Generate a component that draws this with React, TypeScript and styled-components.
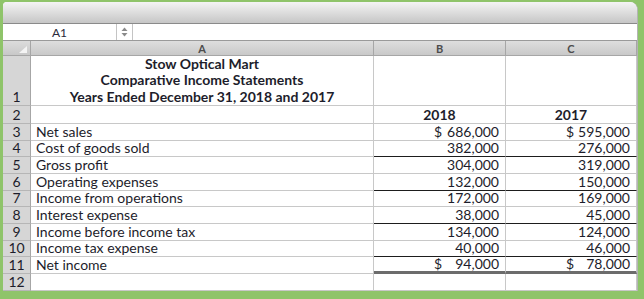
import styled, { createGlobalStyle } from "styled-components";

const Global = createGlobalStyle`
  html, body {
    margin: 0;
    padding: 0;
    background: #8fc46a;
  }
  body {
    font-family: Lato, "Open Sans", sans-serif;
    color: #1d1d2b;
  }
`;

const Window = styled.div`
  margin: 2px 6px 0 3px;
  width: 635px;
  height: 289px;
  background: #fff;
  border-radius: 4px 8px 0 0;
  overflow: hidden;
  display: flex;
  flex-direction: column;
  box-sizing: border-box;
  border-right: 1px solid #b4b4b4;
`;

const TitleBar = styled.div`
  height: 21px;
  flex: none;
  background: linear-gradient(#f4f4f4, #c6c6c6);
  border-bottom: 1px solid #8a8a8a;
`;

const FormulaBar = styled.div`
  height: 16px;
  flex: none;
  display: flex;
  border-bottom: 1px solid #9a9a9a;
`;

const NameBox = styled.div`
  width: 113px;
  display: flex;
  align-items: center;
  justify-content: center;
  font-size: 12px;
  color: #2a2a3a;
  border-right: 1px solid #c4c4c4;
`;

const Spinner = styled.div`
  width: 15px;
  display: flex;
  align-items: center;
  justify-content: center;
  border-right: 1px solid #c4c4c4;
`;

const Sheet = styled.div`
  flex: 1;
  display: grid;
  grid-template-columns: 28px 343px 132px 131px;
  grid-template-rows: 15px 50px 18px repeat(9, 16.667px) 17px;
  font-size: 14px;
`;

const Corner = styled.div`
  position: relative;
  background: linear-gradient(#dcdcdc, #c8c8c8);
  border-right: 1px solid #a6a6a6;
  border-bottom: 1px solid #a6a6a6;
  box-sizing: border-box;
`;

const CornerMark = styled.div`
  position: absolute;
  right: 3px;
  bottom: 2px;
  width: 0;
  height: 0;
  border-left: 8px solid transparent;
  border-bottom: 7px solid #f4f4f4;
`;

const ColHead = styled.div`
  background: linear-gradient(#dedede, #c9c9c9);
  border-right: 1px solid #a6a6a6;
  border-bottom: 1px solid #a6a6a6;
  box-sizing: border-box;
  display: flex;
  align-items: center;
  justify-content: center;
  font-size: 11px;
  font-weight: 700;
  color: #4c4c4c;
`;

const RowHead = styled.div`
  background: #d6d6d6;
  border-right: 1px solid #a6a6a6;
  border-bottom: 1px solid #b6b6b6;
  box-sizing: border-box;
  display: flex;
  align-items: flex-end;
  justify-content: center;
  line-height: 16px;
  font-size: 14px;
  color: #1d1d2b;
`;

type Rule = "single" | "double";
type CellProps = { $rule?: Rule };

const Cell = styled.div<CellProps>`
  box-sizing: border-box;
  border-right: 1px solid #c8c8c8;
  border-bottom: ${(p) =>
    p.$rule === "single"
      ? "1px solid #1d1d1d"
      : p.$rule === "double"
      ? "3px solid #6c6c6c"
      : "1px solid #c8c8c8"};
  display: flex;
  align-items: flex-end;
  line-height: ${(p) => (p.$rule === "double" ? "14px" : "16px")};
  white-space: nowrap;
`;

const LabelCell = styled(Cell)`
  padding-left: 5px;
`;

const TitleCell = styled(Cell)`
  flex-direction: column;
  justify-content: flex-end;
  align-items: center;
  font-weight: 700;
  line-height: 16.3px;
`;

const YearCell = styled(Cell)`
  justify-content: center;
  font-weight: 700;
`;

const AmountCell = styled(Cell)`
  justify-content: space-between;
  padding: 0 6px 0 60px;
`;

const rows: { label: string; b: string; c: string; dollar?: boolean; rule?: Rule }[] = [
  { label: "Net sales", b: "686,000", c: "595,000", dollar: true },
  { label: "Cost of goods sold", b: "382,000", c: "276,000", rule: "single" },
  { label: "Gross profit", b: "304,000", c: "319,000" },
  { label: "Operating expenses", b: "132,000", c: "150,000", rule: "single" },
  { label: "Income from operations", b: "172,000", c: "169,000" },
  { label: "Interest expense", b: "38,000", c: "45,000", rule: "single" },
  { label: "Income before income tax", b: "134,000", c: "124,000" },
  { label: "Income tax expense", b: "40,000", c: "46,000", rule: "single" },
  { label: "Net income", b: "94,000", c: "78,000", dollar: true, rule: "double" },
];

function Amount({ value, dollar, rule }: { value: string; dollar?: boolean; rule?: Rule }) {
  return (
    <AmountCell $rule={rule}>
      <span>{dollar ? "$" : ""}</span>
      <span>{value}</span>
    </AmountCell>
  );
}

export default function App() {
  return (
    <>
      <Global />
      <Window>
        <TitleBar />
        <FormulaBar>
          <NameBox>A1</NameBox>
          <Spinner>
            <svg width="7" height="10" viewBox="0 0 7 10">
              <path d="M3.5 0.5 L6.5 4 H0.5 Z" fill="#8a8a8a" />
              <path d="M3.5 9.5 L6.5 6 H0.5 Z" fill="#8a8a8a" />
            </svg>
          </Spinner>
        </FormulaBar>
        <Sheet>
          <Corner>
            <CornerMark />
          </Corner>
          <ColHead>A</ColHead>
          <ColHead>B</ColHead>
          <ColHead>C</ColHead>

          <RowHead>1</RowHead>
          <TitleCell>
            <span>Stow Optical Mart</span>
            <span>Comparative Income Statements</span>
            <span>Years Ended December 31, 2018 and 2017</span>
          </TitleCell>
          <Cell />
          <Cell />

          <RowHead>2</RowHead>
          <Cell />
          <YearCell>2018</YearCell>
          <YearCell>2017</YearCell>

          {rows.flatMap((r, i) => [
            <RowHead key={`h${i}`}>{i + 3}</RowHead>,
            <LabelCell key={`l${i}`}>{r.label}</LabelCell>,
            <Amount key={`b${i}`} value={r.b} dollar={r.dollar} rule={r.rule} />,
            <Amount key={`c${i}`} value={r.c} dollar={r.dollar} rule={r.rule} />,
          ])}

          <RowHead>12</RowHead>
          <Cell />
          <Cell />
          <Cell />
        </Sheet>
      </Window>
    </>
  );
}
